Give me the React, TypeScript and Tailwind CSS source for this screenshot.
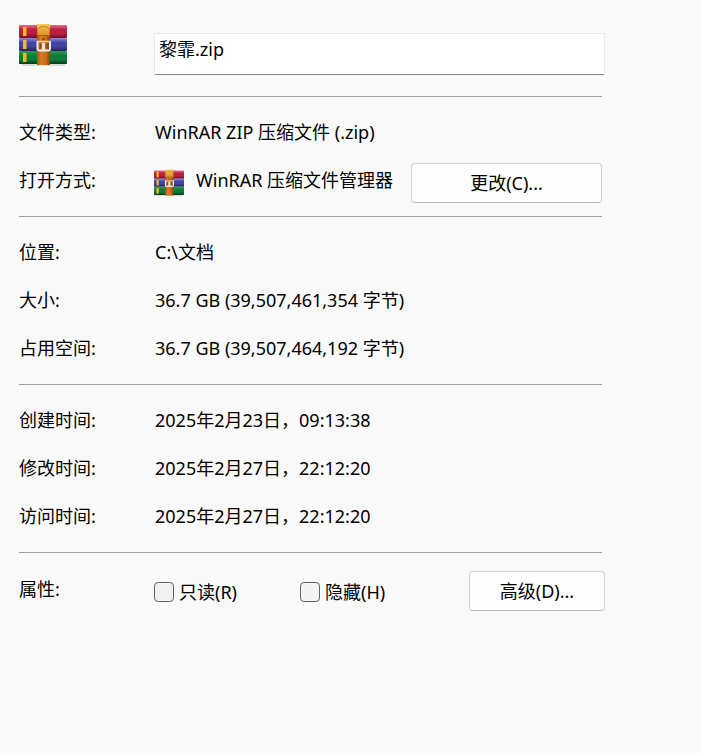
import type { ReactNode } from "react";

const fileInfo = [
  { label: "位置:", value: "C:\\文档" },
  { label: "大小:", value: "36.7 GB (39,507,461,354 字节)" },
  { label: "占用空间:", value: "36.7 GB (39,507,464,192 字节)" },
];

const timestamps = [
  { label: "创建时间:", value: "2025年2月23日，09:13:38" },
  { label: "修改时间:", value: "2025年2月27日，22:12:20" },
  { label: "访问时间:", value: "2025年2月27日，22:12:20" },
];

const attributes = ["只读(R)", "隐藏(H)"];

const books = [
  { id: "red", y: 1, light: "#e8708c", mid: "#b81f40", dark: "#6c0f2c" },
  { id: "blue", y: 14, light: "#8a8cda", mid: "#4345a4", dark: "#22225c" },
  { id: "green", y: 27, light: "#2f9a52", mid: "#107c3a", dark: "#05381a" },
];

function ArchiveIcon({ className, name }: { className: string; name: string }) {
  return (
    <svg className={className} viewBox="0 0 48 42" aria-hidden="true">
      <defs>
        {books.map((book) => (
          <linearGradient key={book.id} id={`${name}-${book.id}`} x1="0" y1="0" x2="0" y2="1">
            <stop offset="0" stopColor={book.light} />
            <stop offset="0.35" stopColor={book.mid} />
            <stop offset="0.65" stopColor={book.mid} />
            <stop offset="1" stopColor={book.dark} />
          </linearGradient>
        ))}
        <linearGradient id={`${name}-belt`} x1="0" y1="0" x2="1" y2="0">
          <stop offset="0" stopColor="#a9520f" />
          <stop offset="0.3" stopColor="#d67c22" />
          <stop offset="0.7" stopColor="#c96b18" />
          <stop offset="1" stopColor="#8a3c08" />
        </linearGradient>
        <linearGradient id={`${name}-top`} x1="0" y1="0" x2="0" y2="1">
          <stop offset="0" stopColor="#f3cd58" />
          <stop offset="1" stopColor="#d98a24" />
        </linearGradient>
      </defs>
      <rect x="3" y="40" width="43" height="2" fill="#d9dbd9" />
      {books.map((book) => (
        <g key={book.id}>
          <rect x="0" y={book.y} width="48" height="13" rx="1" fill={`url(#${name}-${book.id})`} />
          <rect x="4" y={book.y + 2} width="3.500" height="9" fill="#ffb726" />
        </g>
      ))}
      {/* Belt */}
      <rect x="18" y="0" width="13" height="41" fill={`url(#${name}-belt)`} />
      <path d="M18 0h13v12H18z" fill={`url(#${name}-top)`} />
      <path d="M18.500 11V7c0-3 2.500-4.500 6-4.500s6 1.500 6 4.500v4" fill="none" stroke="#c9781f" strokeWidth="1" />
      <path d="M18 11.500h13" stroke="#a55f17" strokeWidth="1" />
      <circle cx="24.500" cy="15" r="1" fill="#6b3209" />
      {/* Buckle */}
      <path
        d="M18.500 17.500v7.500a1.500 1.500 0 0 0 1.500 1.500h9.500a1.500 1.500 0 0 0 1.500-1.500v-7.500"
        fill="none"
        stroke="#ececf0"
        strokeWidth="2"
        strokeLinecap="round"
      />
      <path d="M18.500 17.500h12.500" stroke="#d9d2cc" strokeWidth="1.500" strokeLinecap="round" />
      <path d="M24.500 20v6" stroke="#e2e2e8" strokeWidth="3" strokeLinecap="round" />
      <path d="M21.500 19.500v5M28 19.500v5" stroke="#8a4710" strokeWidth="1.500" />
    </svg>
  );
}

function Separator() {
  return <hr className="mr-[3px] border-t border-[#a0a0a0]" />;
}

function Row({ label, children }: { label: string; children: ReactNode }) {
  return (
    <div className="flex h-12 items-center">
      <dt className="w-[136px] shrink-0">{label}</dt>
      <dd className="flex h-full min-w-0 flex-1 items-center">{children}</dd>
    </div>
  );
}

export default function App() {
  return (
    <main className="min-h-screen bg-[#f9f9f9] pt-6 pr-24 pl-[19px] font-['Noto_Sans','Noto_Sans_CJK_SC',sans-serif] text-[18px] leading-6 text-black">
      <header className="flex h-[72px] items-start">
        <div className="w-[135px] shrink-0">
          <ArchiveIcon className="h-[42px] w-12" name="file" />
        </div>
        <input
          type="text"
          aria-label="文件名"
          defaultValue="黎霏.zip"
          className="mt-[9px] h-[42px] min-w-0 flex-1 rounded-xs border border-[#e9e9e9] border-b-[#868686] bg-white px-1 pb-3 outline-none"
        />
      </header>

      <Separator />
      <dl className="pt-[11px] pb-3">
        <Row label="文件类型:">WinRAR ZIP 压缩文件 (.zip)</Row>
        <Row label="打开方式:">
          <ArchiveIcon className="mb-[7px] -ml-px h-7 w-[30px] shrink-0 self-end" name="app" />
          <span className="ml-3 whitespace-nowrap">WinRAR 压缩文件管理器</span>
          <button
            type="button"
            className="mr-[3px] mb-px ml-auto h-10 w-[191px] self-end rounded border border-[#d0d0d0] border-b-[#bcbcbc] bg-[#fdfdfd]"
          >
            更改(C)...
          </button>
        </Row>
      </dl>

      <Separator />
      <dl className="pt-[11px] pb-3">
        {fileInfo.map((item) => (
          <Row key={item.label} label={item.label}>
            {item.value}
          </Row>
        ))}
      </dl>

      <Separator />
      <dl className="pt-[11px] pb-3">
        {timestamps.map((item) => (
          <Row key={item.label} label={item.label}>
            {item.value}
          </Row>
        ))}
      </dl>

      <Separator />
      <fieldset className="flex items-center pt-[18px]" aria-label="属性">
        <span className="w-[135px] shrink-0 pb-1">属性:</span>
        {attributes.map((attribute) => (
          <label key={attribute} className="flex w-[146px] items-center gap-[5px] pt-0.5">
            <input
              type="checkbox"
              className="size-5 appearance-none rounded border border-[#626262] bg-[#f3f3f3] checked:bg-[#005fb8]"
            />
            {attribute}
          </label>
        ))}
        <button
          type="button"
          className="ml-auto h-10 w-[136px] rounded border border-[#d0d0d0] border-b-[#bcbcbc] bg-[#fdfdfd]"
        >
          高级(D)...
        </button>
      </fieldset>
    </main>
  );
}
